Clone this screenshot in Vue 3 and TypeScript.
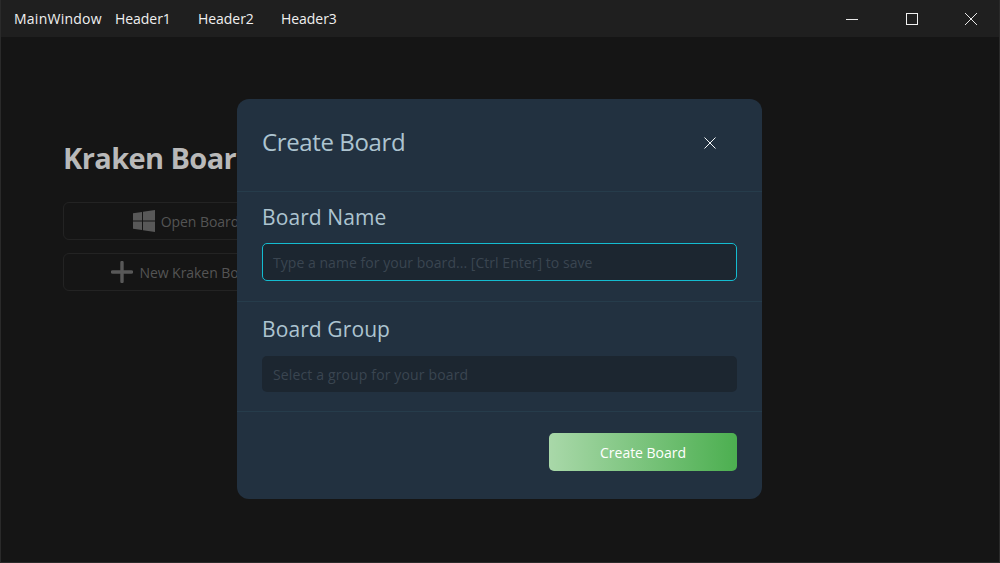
<script setup lang="ts">
const headers: string[] = ['Header1', 'Header2', 'Header3']
</script>

<template>
  <div class="window">
    <header class="titlebar">
      <span class="app-title">MainWindow</span>
      <nav class="menu">
        <span v-for="h in headers" :key="h" class="menu-item">{{ h }}</span>
      </nav>
      <div class="controls">
        <span class="ctl">
          <svg width="14" height="14" viewBox="0 0 14 14"><path d="M1 7.5h12" stroke="#e8e8e8" stroke-width="1" fill="none" /></svg>
        </span>
        <span class="ctl">
          <svg width="14" height="14" viewBox="0 0 14 14"><rect x="1.5" y="1.5" width="11" height="11" stroke="#f0f0f0" stroke-width="1" fill="none" /></svg>
        </span>
        <span class="ctl">
          <svg width="14" height="14" viewBox="0 0 14 14"><path d="M1 1l12 12M13 1L1 13" stroke="#e8e8e8" stroke-width="1" fill="none" /></svg>
        </span>
      </div>
    </header>

    <main class="content">
      <h1 class="brand">Kraken Boards</h1>
      <button class="action">
        <svg class="win-icon" width="22" height="22" viewBox="0 0 22 22">
          <path d="M0 3.2l9-1.3v8.6H0zM10 1.8L22 0v10.5H10zM0 11.5h9v8.6l-9-1.3zM10 11.5h12V22l-12-1.8z" fill="#585858" />
        </svg>
        <span>Open Board</span>
      </button>
      <button class="action">
        <svg width="22" height="22" viewBox="0 0 22 22">
          <path d="M11 1.5v19M1.5 11h19" stroke="#585858" stroke-width="3.4" stroke-linecap="round" fill="none" />
        </svg>
        <span>New Kraken Board</span>
      </button>
    </main>

    <section class="modal">
      <div class="modal-head">
        <h2 class="modal-title">Create Board</h2>
        <svg class="close" width="14" height="14" viewBox="0 0 14 14">
          <path d="M1.5 1.5l11 11M12.5 1.5l-11 11" stroke="#f2f5f7" stroke-width="1" fill="none" />
        </svg>
      </div>
      <div class="field">
        <label class="label">Board Name</label>
        <div class="input focused">Type a name for your board... [Ctrl Enter] to save</div>
      </div>
      <div class="field group">
        <label class="label">Board Group</label>
        <div class="input select">Select a group for your board</div>
      </div>
      <div class="modal-foot">
        <button class="submit">Create Board</button>
      </div>
    </section>
  </div>
</template>

<style>
html, body { margin: 0; background: #151515; }
</style>

<style scoped>
.window {
  position: relative;
  width: 1000px;
  height: 563px;
  box-sizing: border-box;
  overflow: hidden;
  display: flex;
  flex-direction: column;
  background: #151515;
  border: 1px solid #2a2a2a;
  border-top: 0;
  font-family: "Open Sans", "Noto Sans", sans-serif;
}
.titlebar {
  height: 37px;
  flex: none;
  display: flex;
  align-items: center;
  background: #1f1f1f;
  color: #f0f0f0;
  font-size: 14px;
  letter-spacing: -0.05px;
  padding-left: 13px;
}
.app-title { width: 101px; letter-spacing: 0.25px; }
.menu { display: flex; }
.menu-item { width: 83px; }
.controls { margin-left: auto; margin-right: -2px; display: flex; }
.ctl {
  width: 59.5px;
  height: 37px;
  display: flex;
  align-items: center;
  justify-content: center;
}
.content {
  flex: 1;
  padding: 101px 0 0 62px;
  display: flex;
  flex-direction: column;
  align-items: flex-start;
}
.brand {
  margin: 0 0 24px;
  font-size: 29px;
  line-height: 40px;
  font-weight: 700;
  letter-spacing: -0.6px;
  color: #b9b9b9;
}
.action {
  width: 246px;
  height: 38px;
  margin: 0 0 13px;
  padding: 0;
  display: flex;
  align-items: center;
  justify-content: center;
  gap: 6px;
  background: transparent;
  border: 1px solid #232323;
  border-radius: 6px;
  color: #545454;
  font: inherit;
  font-size: 14px;
  letter-spacing: -0.05px;
}
.modal {
  position: absolute;
  left: 236px;
  top: 99px;
  width: 525px;
  height: 400px;
  display: flex;
  flex-direction: column;
  background: #223140;
  border-radius: 12px;
  color: #adc4d0;
}
.modal-head {
  height: 93px;
  box-sizing: border-box;
  flex: none;
  display: flex;
  align-items: center;
  justify-content: space-between;
  padding: 0 45px 7px 25px;
  border-bottom: 1px solid #263c4b;
}
.modal-title {
  margin: 0;
  font-size: 24px;
  font-weight: 400;
  letter-spacing: -0.38px;
}
.close { margin-top: 2px; }
.field {
  height: 110px;
  box-sizing: border-box;
  padding: 11px 25px 0;
  display: flex;
  flex-direction: column;
  border-bottom: 1px solid #263c4b;
}
.field.group { padding-top: 12px; }
.label {
  font-size: 21px;
  line-height: 28px;
  letter-spacing: 0.1px;
  margin-bottom: 12px;
}
.field.group .label { margin-bottom: 12px; line-height: 30px; }
.input {
  height: 38px;
  box-sizing: border-box;
  padding: 0 10px;
  display: flex;
  align-items: center;
  border-radius: 5px;
  background: #1c2630;
  color: #3a4550;
  font-size: 14px;
  letter-spacing: 0.04px;
}
.focused { border: 1px solid #14bcd0; }
.select { height: 36px; padding: 0 11px; letter-spacing: 0.14px; }
.modal-foot {
  flex: 1;
  display: flex;
  justify-content: flex-end;
  padding: 21px 25px 0 0;
}
.submit {
  width: 188px;
  height: 38px;
  border: 0;
  border-radius: 5px;
  background: linear-gradient(90deg, #a9d8a9, #4caf50);
  color: #fff;
  font: inherit;
  font-size: 14px;
  letter-spacing: -0.03px;
}
</style>
